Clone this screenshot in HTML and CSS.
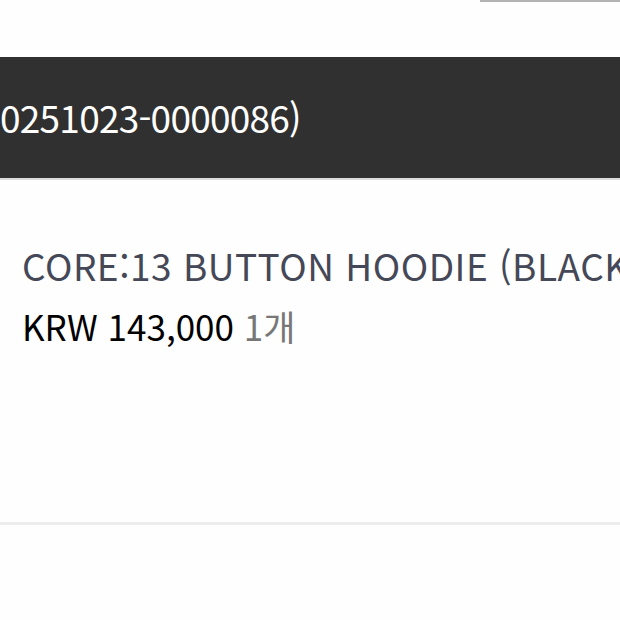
FILE: index.html
```html
<!DOCTYPE html>
<html lang="ko">
<head>
<meta charset="utf-8">
<link rel="stylesheet" href="styles.css">
</head>
<body>
<div class="page">
  <div class="topstrip"><div class="tab-edge"></div></div>
  <div class="order-bar">
    <span class="order-no">0251023-0000086)</span>
  </div>
  <div class="item">
    <div class="item-name">CORE:13 BUTTON HOODIE (BLACK)</div>
    <div class="item-price"><span class="price">KRW 143,000</span> <span class="qty">1개</span></div>
  </div>
  <div class="divider"></div>
</div>
</body>
</html>
```
FILE: styles.css
```css
html, body {
  margin: 0;
  padding: 0;
  background: #fefefe;
  width: 620px;
  height: 620px;
  overflow: hidden;
}
.page {
  font-family: "Noto Sans CJK KR", "Noto Sans", sans-serif;
  display: flex;
  flex-direction: column;
}
.topstrip {
  height: 57px;
  display: flex;
  justify-content: flex-end;
  align-items: flex-start;
}
.tab-edge {
  width: 140px;
  height: 2px;
  background: #b3b3b3;
}
.order-bar {
  height: 121px;
  background: #303030;
  border-bottom: 2px solid #dcdcdc;
  display: flex;
  align-items: center;
  overflow: hidden;
  white-space: nowrap;
}
.order-no {
  color: #ffffff;
  font-size: 37px;
  line-height: 1;
  letter-spacing: -0.75px;
}
.item {
  height: 342px;
  padding: 0 0 0 22px;
  overflow: hidden;
  white-space: nowrap;
}
.item-name {
  margin-top: 60px;
  color: #454857;
  font-size: 37px;
  font-weight: 400;
  letter-spacing: 0.5px;
  line-height: 50px;
}
.item-price {
  margin-top: 14px;
  font-size: 35px;
  line-height: 44px;
}
.price {
  color: #000000;
}
.qty {
  color: #777777;
}
.divider {
  height: 3px;
  background: #ececec;
}
```
